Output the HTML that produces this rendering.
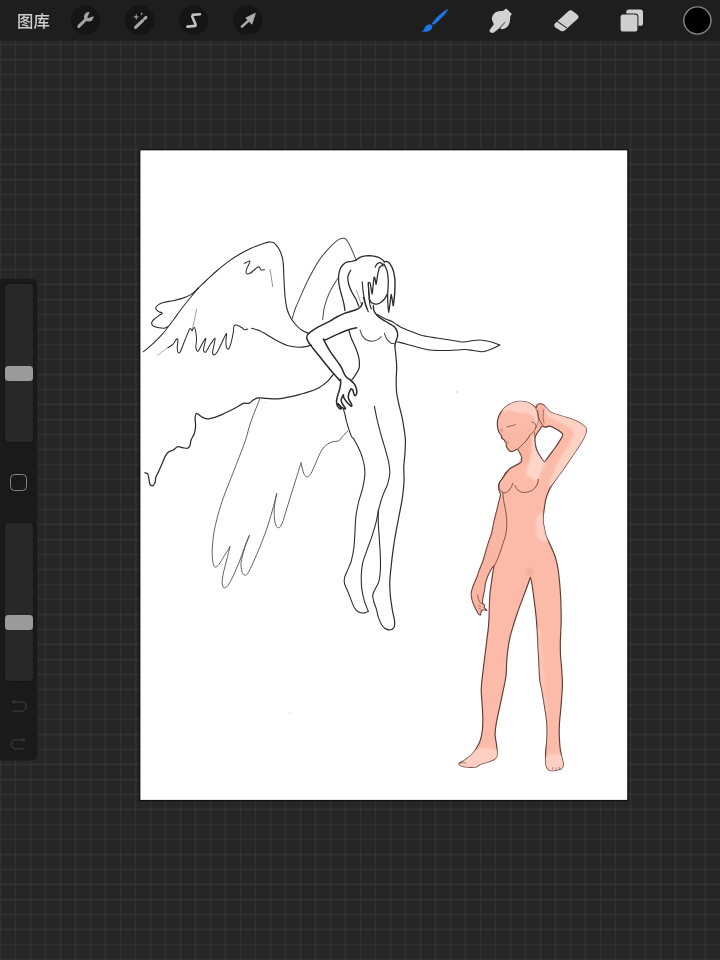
<!DOCTYPE html>
<html lang="zh-CN">
<head>
<meta charset="utf-8">
<title>Procreate</title>
<style>
html,body{margin:0;padding:0;}
body{width:720px;height:960px;overflow:hidden;position:relative;background:#262626;
 font-family:"Liberation Sans","Noto Sans CJK SC",sans-serif;}
#grid{position:absolute;left:0;top:0;width:720px;height:960px;
 background-image:
  linear-gradient(to right,rgba(255,255,255,0.014) 0,rgba(255,255,255,0.014) 1px,rgba(255,255,255,0.046) 1px,rgba(255,255,255,0.046) 2px,rgba(255,255,255,0.014) 2px,rgba(255,255,255,0.014) 3px,transparent 3px),
  linear-gradient(to bottom,rgba(255,255,255,0.014) 0,rgba(255,255,255,0.014) 1px,rgba(255,255,255,0.046) 1px,rgba(255,255,255,0.046) 2px,rgba(255,255,255,0.014) 2px,rgba(255,255,255,0.014) 3px,transparent 3px);
 background-size:15px 15px,15px 15px;
 background-position:-1px 0,0 13px;}
#topbar{position:absolute;left:0;top:0;width:720px;height:40px;background:#1e1e1e;box-shadow:0 1px 0 rgba(30,30,30,0.45);}
#gallery{position:absolute;left:17.2px;top:9.9px;font-size:16.4px;line-height:22px;color:#cdcdcd;letter-spacing:0;font-weight:500;will-change:transform;}
#canvas{pointer-events:none;}
#side{position:absolute;left:0;top:279px;width:37px;height:481px;background:#1a1a1a;border-radius:0 5px 5px 0;box-shadow:0 0 0 0.5px #202020;}
.sq{position:absolute;left:10px;top:195px;width:15.2px;height:15.4px;border:1.5px solid #848484;border-radius:4.5px;}
.track{position:absolute;left:4.5px;width:28.5px;background:#282828;border-radius:4px;box-shadow:0 0 0 1px #171717,0 0 0 2px rgba(23,23,23,0.45);}
.knob{position:absolute;left:4.5px;width:28.5px;height:15px;background:#9b9b9b;border-radius:3.5px;}
#art{position:absolute;left:0;top:0;width:720px;height:960px;}
</style>
</head>
<body>
<div id="grid"></div>
<svg id="canvas" width="720" height="960" viewBox="0 0 720 960" style="position:absolute;left:0;top:0"><rect x="138.6" y="148.6" width="490.2" height="652.9" fill="#1b1b1b" opacity="0.6"/><rect x="139.3" y="149.3" width="488.9" height="651.6" fill="#101010"/><rect x="140.4" y="150.35" width="486.8" height="649.55" fill="#fff"/></svg>
<div id="side">
 <div class="track" style="top:5px;height:158px"></div>
 <div class="knob" style="top:86.5px"></div>
 <div class="sq"></div>
 <div class="track" style="top:244px;height:158px"></div>
 <div class="knob" style="top:335.8px"></div>
 <svg width="37" height="70" viewBox="0 690 37 70" style="position:absolute;left:0;top:411px">
  <g fill="none" stroke="#333" stroke-width="1.5" stroke-linecap="round" stroke-linejoin="round">
   <path d="M13.6,701.8 H21.4 A4.7,4.7 0 0 1 21.4,711.2 H13.2"/>
   <path d="M23.4,739.8 H15.8 A4.5,4.5 0 0 0 15.8,748.8 H23.6"/>
  </g>
  <path d="M11.4,701.8 L14.8,699.2 V704.4 Z" fill="#333"/>
  <path d="M26,739.8 L22.6,737.2 V742.4 Z" fill="#333"/>
 </svg>
</div>
<div id="topbar">
 <div id="gallery">图库</div>
 <svg id="icons" width="720" height="41" viewBox="0 0 720 41" style="position:absolute;left:0;top:0">
  <g fill="#151515">
   <circle cx="85.3" cy="20.2" r="14.6"/><circle cx="139.8" cy="20.2" r="14.6"/><circle cx="193.6" cy="20.2" r="14.6"/><circle cx="247.8" cy="20.2" r="14.6"/>
  </g>
  <!-- wrench -->
  <g>
   <path d="M78.8,26.4 L86.6,18.6" stroke="#a3a3a3" stroke-width="3.0" stroke-linecap="round" fill="none"/>
   <circle cx="88.7" cy="16.8" r="4.8" fill="#a3a3a3"/>
   <path d="M88.3,17.2 L91.2,10.4 L95.6,14.6 Z" fill="#151515" stroke="#151515" stroke-width="1.6" stroke-linejoin="round"/>
  </g>
  <!-- wand -->
  <g>
   <path d="M135.6,27.4 L142.6,20.6" stroke="#a8a8a8" stroke-width="3.0" stroke-linecap="round"/>
   <path d="M144.6,18.7 L146.0,17.4" stroke="#a8a8a8" stroke-width="3.0" stroke-linecap="round"/>
   <path d="M136.2,13.3 L136.9,16.2 L139.8,16.9 L136.9,17.6 L136.2,20.5 L135.5,17.6 L132.6,16.9 L135.5,16.2 Z" fill="#a8a8a8"/>
   <path d="M141.7,12.1 L142.1,13.5 L143.5,13.9 L142.1,14.3 L141.7,15.7 L141.3,14.3 L139.9,13.9 L141.3,13.5 Z" fill="#a8a8a8"/>
  </g>
  <!-- S selection -->
  <g stroke="#c2c2c2" stroke-width="2.6" stroke-linecap="round" fill="none">
   <path d="M192.6,14.9 L200.0,14.2"/>
   <path d="M192.2,16.6 L195.6,24.4"/>
   <path d="M187.4,26.6 L195.4,25.9"/>
  </g>
  <!-- arrow -->
  <g>
   <path d="M241.9,26.7 L249.2,20" stroke="#adadad" stroke-width="2.4" stroke-linecap="round"/>
   <path d="M255.4,13.2 L245.8,17.9 L251.9,24.2 Z" fill="#adadad" stroke="#adadad" stroke-width="0.8" stroke-linejoin="round"/>
  </g>
  <!-- brush (active, blue) -->
  <g fill="#1f74e6">
   <path d="M448.2,9.0 C447.4,12.0 441.0,19.6 433.3,25.0 L431.8,23.5 C437.4,15.8 445.0,9.8 448.2,9.0 Z"/>
   <path d="M431.0,24.4 L432.4,25.9 C432.6,28.6 430.2,31.2 426.6,31.7 C424.4,32.0 422.6,31.8 421.7,31.6 C423.4,30.6 424,29.6 424.6,28.0 C425.6,25.3 428.4,24.0 431.0,24.4 Z"/>
  </g>
  <!-- smudge finger -->
  <g>
   <path d="M491.4,32.8 C490.4,32.6 489.6,32.0 489.6,31.0 C489.5,30.4 489.6,30.0 489.9,29.6 L493.9,24.2 C492.8,22 491.7,19.8 491.9,18.1 C492.1,16 493.8,13.6 495.6,12.3 C497.2,11.3 499.6,10.9 502.2,10.9 C503,10.9 503.6,10.6 503.9,10.3 L506.1,8.4 L511.9,13.9 L510.3,15.9 C510.1,17.6 510.1,20 509.7,22 C509.4,23.5 509,24.5 508.3,25.4 C507.6,26.5 506.6,27.5 505.6,28.1 C504.6,28.8 503.2,29.3 502.2,29.2 C501.4,29.2 500.8,28.9 500.6,28.4 L500.3,27.4 L494.0,32.5 C493.2,33.0 492.2,33.0 491.4,32.8 Z" fill="#d2d2d2"/>
   <path d="M500.1,27.7 L504.7,22.6" stroke="#1e1e1e" stroke-width="0.9" stroke-linecap="round"/>
  </g>
  <!-- eraser -->
  <g>
   <path d="M555.0,23.6 L568.6,11.0 C569.8,9.9 571.4,9.9 572.6,10.9 L577.6,15.0 C578.8,16.0 578.8,17.6 577.7,18.7 L564.6,30.6 C563.6,31.5 562.2,31.6 561.0,30.9 L555.4,27.4 C554.0,26.5 553.9,24.7 555.0,23.6 Z" fill="#d0d0d0"/>
   <path d="M557.3,21.4 L566.6,27.9" stroke="#1e1e1e" stroke-width="1.1"/>
  </g>
  <!-- layers -->
  <g>
   <rect x="626.3" y="9.6" width="16.7" height="16.2" rx="2.6" fill="#cfcfcf"/>
   <rect x="619.6" y="13.6" width="18.8" height="19.0" rx="3.4" fill="#1e1e1e"/>
   <rect x="620.6" y="14.6" width="16.8" height="17.0" rx="2.6" fill="#cfcfcf"/>
  </g>
  <!-- colour -->
  <circle cx="697.4" cy="20.5" r="13.6" fill="#000" stroke="#858585" stroke-width="1.4"/>
 </svg>
</div>
<svg id="art" viewBox="0 0 720 960">
<g id="fig">
<path d="M519.8,401.3C521.4,401.2 524.2,401.5 525.7,401.8C527.2,402.1 529.5,403.1 530.7,403.8C531.9,404.5 534.0,406.2 534.8,406.8C535.6,407.4 536.3,408.4 536.6,408.2C536.9,408.0 536.4,406.0 536.8,405.4C537.2,404.8 538.6,403.9 539.5,403.8C540.4,403.7 542.4,404.1 543.4,404.7C544.4,405.3 546.0,407.6 547.0,408.6C548.0,409.6 549.2,411.5 550.6,412.3C552.0,413.1 555.3,414.0 557.2,414.6C559.1,415.2 562.9,416.3 565.0,417.0C567.1,417.7 570.9,418.7 572.8,419.5C574.7,420.3 578.1,421.8 579.6,422.7C581.1,423.6 583.5,425.2 584.4,426.1C585.3,427.0 586.2,428.4 586.4,429.4C586.6,430.4 586.1,432.5 585.6,433.9C585.1,435.3 583.7,438.3 582.8,440.0C581.9,441.7 579.8,445.0 578.6,446.9C577.4,448.8 574.6,452.8 573.5,454.5C572.4,456.2 571.4,457.4 570.0,459.4C568.6,461.4 565.1,466.9 563.3,469.4C561.5,471.9 558.3,476.1 556.7,478.3C555.1,480.5 552.5,484.2 551.3,486.1C550.1,488.0 548.7,491.0 548.0,492.8C547.3,494.6 546.3,497.5 545.8,499.4C545.3,501.3 544.8,505.1 544.5,507.2C544.2,509.3 543.6,513.1 543.4,515.0C543.2,516.9 543.1,519.9 543.2,521.7C543.3,523.5 544.0,526.4 544.4,528.3C544.8,530.2 545.1,533.1 546.0,535.6C546.9,538.1 549.8,543.7 551.1,546.7C552.4,549.7 554.7,554.7 555.6,557.8C556.5,560.9 557.7,566.7 558.2,570.0C558.7,573.3 559.3,578.9 559.6,582.2C559.9,585.5 560.3,591.1 560.5,594.4C560.7,597.7 560.9,603.4 561.0,606.7C561.1,610.0 561.2,615.6 561.2,618.9C561.2,622.2 560.9,627.8 560.8,631.1C560.7,634.4 560.3,640.0 560.3,643.3C560.3,646.6 560.3,652.3 560.5,655.6C560.7,658.9 561.4,664.5 561.6,667.8C561.8,671.1 562.2,677.0 562.3,680.0C562.4,683.0 562.4,686.6 562.2,690.0C562.0,693.4 561.4,701.7 561.1,705.6C560.8,709.5 560.1,715.6 559.8,718.9C559.5,722.2 559.3,727.4 559.2,730.0C559.1,732.6 559.3,735.6 559.4,738.1C559.5,740.6 559.9,746.3 560.2,748.9C560.5,751.5 561.6,755.8 562.0,757.9C562.4,760.0 563.5,763.1 563.4,764.6C563.3,766.1 562.1,768.1 561.2,768.8C560.3,769.5 557.8,769.9 556.5,770.2C555.2,770.5 552.3,770.9 551.1,770.7C549.9,770.5 548.2,769.8 547.5,768.8C546.8,767.8 546.0,765.5 545.7,763.3C545.4,761.1 545.5,755.4 545.6,752.5C545.7,749.6 546.4,744.6 546.6,741.7C546.8,738.8 547.1,733.8 547.1,730.8C547.1,727.8 546.8,722.3 546.4,718.9C546.0,715.5 545.0,709.5 544.4,705.6C543.8,701.7 542.4,693.4 541.8,690.0C541.2,686.6 540.2,683.8 539.8,680.0C539.4,676.2 539.0,666.2 538.8,661.7C538.6,657.2 538.2,650.5 538.0,646.4C537.8,642.3 537.5,635.2 537.2,631.1C536.9,627.0 536.4,619.9 536.0,615.8C535.6,611.7 534.7,604.3 534.2,600.6C533.7,596.9 533.0,591.0 532.6,588.3C532.2,585.6 531.4,581.5 531.1,580.0C530.8,578.5 530.5,577.4 530.3,577.4C530.1,577.4 529.9,578.5 529.4,580.0C528.9,581.5 527.5,585.6 526.5,588.3C525.5,591.0 523.1,597.3 521.9,600.6C520.7,603.9 518.5,609.5 517.4,612.8C516.3,616.1 514.5,621.7 513.5,625.0C512.5,628.3 510.7,633.9 510.0,637.2C509.3,640.5 508.3,646.2 507.9,649.5C507.5,652.8 506.9,658.4 506.7,661.7C506.5,665.0 506.4,671.5 506.2,673.9C506.0,676.3 505.8,677.9 505.4,680.0C505.0,682.1 504.0,686.6 503.3,690.0C502.6,693.4 500.9,701.5 500.0,705.6C499.1,709.7 497.4,717.3 496.7,721.1C496.0,724.9 495.1,731.2 495.1,734.4C495.1,737.6 496.3,742.6 496.6,745.3C496.9,748.0 497.5,752.5 497.3,754.3C497.1,756.1 496.2,757.8 495.1,758.8C494.0,759.8 490.8,761.0 488.8,761.8C486.8,762.6 481.5,763.9 479.8,764.6C478.1,765.3 477.8,766.7 476.2,767.0C474.6,767.3 470.2,767.4 468.1,767.2C466.0,767.0 462.0,766.2 460.8,765.7C459.6,765.2 458.4,764.3 459.0,763.5C459.6,762.7 463.4,761.2 465.3,759.7C467.2,758.2 471.6,754.9 473.5,752.5C475.4,750.1 478.6,744.6 479.8,741.7C481.0,738.8 481.9,733.8 482.3,730.8C482.7,727.8 482.8,722.3 482.8,718.9C482.8,715.5 482.4,709.5 482.2,705.6C482.0,701.7 481.2,693.4 481.2,690.0C481.2,686.6 481.7,683.4 482.0,680.0C482.3,676.6 483.4,668.4 483.8,664.7C484.2,661.0 484.9,655.8 485.3,652.5C485.7,649.2 486.4,643.6 486.8,640.3C487.2,637.0 488.0,631.4 488.3,628.1C488.6,624.8 489.0,619.1 489.1,615.8C489.2,612.5 489.3,606.9 489.4,603.6C489.5,600.3 489.9,594.2 490.2,591.4C490.5,588.6 491.1,584.8 491.4,582.5C491.7,580.2 492.3,576.4 492.6,574.2C492.9,572.0 494.0,566.6 493.8,566.0C493.6,565.4 491.6,568.6 490.8,570.0C490.0,571.4 488.2,574.9 487.5,576.7C486.8,578.5 485.8,581.5 485.4,583.3C485.0,585.1 484.9,588.3 484.6,590.0C484.3,591.7 483.6,594.4 483.3,595.8C483.0,597.2 482.6,599.8 482.5,600.8C482.4,601.8 482.2,602.7 482.5,603.3C482.8,603.9 484.4,604.7 484.6,605.2C484.8,605.7 483.7,606.6 484.0,607.3C484.3,608.0 486.8,610.2 486.8,610.5C486.8,610.8 484.9,609.7 484.2,609.8C483.5,609.9 482.0,610.5 481.5,611.0C481.0,611.5 480.9,612.8 480.8,613.3C480.7,613.8 480.7,615.1 480.4,615.1C480.1,615.1 479.0,614.4 478.2,613.3C477.4,612.2 475.5,608.6 474.6,606.7C473.7,604.8 472.2,601.0 471.8,599.0C471.4,597.0 471.1,593.9 471.4,592.0C471.7,590.1 473.0,586.6 473.8,584.5C474.6,582.4 476.3,578.7 477.1,576.5C477.9,574.3 479.2,570.5 480.0,568.3C480.8,566.1 482.3,563.2 483.3,560.0C484.3,556.8 486.7,548.0 487.8,544.4C488.9,540.8 490.9,535.8 491.7,532.8C492.5,529.8 493.2,524.7 493.9,521.7C494.6,518.7 496.0,513.3 496.7,510.6C497.4,507.9 498.4,503.8 498.9,501.7C499.4,499.6 500.6,495.9 500.6,494.5C500.6,493.1 499.5,492.0 499.2,491.0C498.9,490.0 498.6,488.3 498.6,487.2C498.6,486.1 498.8,484.1 499.4,482.8C500.0,481.5 502.4,478.5 503.3,477.2C504.2,475.9 505.0,473.9 506.0,472.7C507.0,471.5 509.4,469.0 510.8,468.0C512.2,467.0 515.0,465.9 516.4,465.1C517.8,464.3 520.6,462.9 521.3,461.7C522.0,460.5 521.8,457.7 521.3,456.1C520.8,454.5 518.6,450.0 517.5,449.4C516.4,448.8 514.2,451.0 513.2,451.3C512.2,451.6 511.0,451.6 510.3,451.3C509.6,451.0 508.4,449.6 507.8,448.8C507.2,448.0 506.3,446.2 506.1,445.5C505.9,444.8 506.6,443.8 506.5,443.4C506.4,443.0 505.6,442.7 505.3,442.2C505.0,441.7 504.5,440.3 504.0,439.7C503.5,439.1 501.8,438.1 501.5,437.6C501.2,437.1 502.0,436.7 501.9,436.3C501.8,435.9 501.1,435.4 500.7,434.7C500.3,434.0 499.0,432.4 498.6,431.3C498.2,430.2 497.6,427.7 497.5,426.3C497.4,424.9 497.2,422.0 497.5,420.5C497.8,419.0 498.6,416.2 499.4,414.7C500.2,413.2 502.0,410.6 503.2,409.3C504.4,408.0 506.8,406.0 508.2,405.1C509.6,404.2 512.5,402.7 514.0,402.2C515.5,401.7 518.2,401.4 519.8,401.3Z M541.7,426.4C542.4,426.1 544.5,427.1 545.5,427.1C546.5,427.1 548.2,426.0 549.4,426.1C550.6,426.2 553.0,427.3 554.3,428.0C555.6,428.7 558.1,430.2 559.2,431.0C560.3,431.8 562.2,433.1 562.6,433.9C563.0,434.7 562.6,435.8 562.1,436.8C561.6,437.8 560.1,440.2 559.2,441.6C558.3,443.0 556.4,445.9 555.3,447.5C554.2,449.1 552.0,451.8 550.9,453.3C549.8,454.8 547.9,457.6 547.0,458.7C546.1,459.8 545.1,461.8 544.4,461.9C543.7,462.0 542.5,460.2 541.7,459.1C540.9,458.0 539.1,454.8 538.3,453.3C537.5,451.8 536.3,449.1 535.8,447.5C535.3,445.9 534.8,443.0 534.7,441.6C534.6,440.2 534.9,438.0 535.3,436.8C535.7,435.6 536.9,433.5 537.6,432.5C538.3,431.5 539.7,429.8 540.2,429.0C540.7,428.2 541.0,426.7 541.7,426.4Z" fill="#fcbba8" fill-rule="evenodd" stroke="#5e3a34" stroke-width="1.15" stroke-linejoin="round"/>
<clipPath id="sil"><path d="M519.8,401.3C521.4,401.2 524.2,401.5 525.7,401.8C527.2,402.1 529.5,403.1 530.7,403.8C531.9,404.5 534.0,406.2 534.8,406.8C535.6,407.4 536.3,408.4 536.6,408.2C536.9,408.0 536.4,406.0 536.8,405.4C537.2,404.8 538.6,403.9 539.5,403.8C540.4,403.7 542.4,404.1 543.4,404.7C544.4,405.3 546.0,407.6 547.0,408.6C548.0,409.6 549.2,411.5 550.6,412.3C552.0,413.1 555.3,414.0 557.2,414.6C559.1,415.2 562.9,416.3 565.0,417.0C567.1,417.7 570.9,418.7 572.8,419.5C574.7,420.3 578.1,421.8 579.6,422.7C581.1,423.6 583.5,425.2 584.4,426.1C585.3,427.0 586.2,428.4 586.4,429.4C586.6,430.4 586.1,432.5 585.6,433.9C585.1,435.3 583.7,438.3 582.8,440.0C581.9,441.7 579.8,445.0 578.6,446.9C577.4,448.8 574.6,452.8 573.5,454.5C572.4,456.2 571.4,457.4 570.0,459.4C568.6,461.4 565.1,466.9 563.3,469.4C561.5,471.9 558.3,476.1 556.7,478.3C555.1,480.5 552.5,484.2 551.3,486.1C550.1,488.0 548.7,491.0 548.0,492.8C547.3,494.6 546.3,497.5 545.8,499.4C545.3,501.3 544.8,505.1 544.5,507.2C544.2,509.3 543.6,513.1 543.4,515.0C543.2,516.9 543.1,519.9 543.2,521.7C543.3,523.5 544.0,526.4 544.4,528.3C544.8,530.2 545.1,533.1 546.0,535.6C546.9,538.1 549.8,543.7 551.1,546.7C552.4,549.7 554.7,554.7 555.6,557.8C556.5,560.9 557.7,566.7 558.2,570.0C558.7,573.3 559.3,578.9 559.6,582.2C559.9,585.5 560.3,591.1 560.5,594.4C560.7,597.7 560.9,603.4 561.0,606.7C561.1,610.0 561.2,615.6 561.2,618.9C561.2,622.2 560.9,627.8 560.8,631.1C560.7,634.4 560.3,640.0 560.3,643.3C560.3,646.6 560.3,652.3 560.5,655.6C560.7,658.9 561.4,664.5 561.6,667.8C561.8,671.1 562.2,677.0 562.3,680.0C562.4,683.0 562.4,686.6 562.2,690.0C562.0,693.4 561.4,701.7 561.1,705.6C560.8,709.5 560.1,715.6 559.8,718.9C559.5,722.2 559.3,727.4 559.2,730.0C559.1,732.6 559.3,735.6 559.4,738.1C559.5,740.6 559.9,746.3 560.2,748.9C560.5,751.5 561.6,755.8 562.0,757.9C562.4,760.0 563.5,763.1 563.4,764.6C563.3,766.1 562.1,768.1 561.2,768.8C560.3,769.5 557.8,769.9 556.5,770.2C555.2,770.5 552.3,770.9 551.1,770.7C549.9,770.5 548.2,769.8 547.5,768.8C546.8,767.8 546.0,765.5 545.7,763.3C545.4,761.1 545.5,755.4 545.6,752.5C545.7,749.6 546.4,744.6 546.6,741.7C546.8,738.8 547.1,733.8 547.1,730.8C547.1,727.8 546.8,722.3 546.4,718.9C546.0,715.5 545.0,709.5 544.4,705.6C543.8,701.7 542.4,693.4 541.8,690.0C541.2,686.6 540.2,683.8 539.8,680.0C539.4,676.2 539.0,666.2 538.8,661.7C538.6,657.2 538.2,650.5 538.0,646.4C537.8,642.3 537.5,635.2 537.2,631.1C536.9,627.0 536.4,619.9 536.0,615.8C535.6,611.7 534.7,604.3 534.2,600.6C533.7,596.9 533.0,591.0 532.6,588.3C532.2,585.6 531.4,581.5 531.1,580.0C530.8,578.5 530.5,577.4 530.3,577.4C530.1,577.4 529.9,578.5 529.4,580.0C528.9,581.5 527.5,585.6 526.5,588.3C525.5,591.0 523.1,597.3 521.9,600.6C520.7,603.9 518.5,609.5 517.4,612.8C516.3,616.1 514.5,621.7 513.5,625.0C512.5,628.3 510.7,633.9 510.0,637.2C509.3,640.5 508.3,646.2 507.9,649.5C507.5,652.8 506.9,658.4 506.7,661.7C506.5,665.0 506.4,671.5 506.2,673.9C506.0,676.3 505.8,677.9 505.4,680.0C505.0,682.1 504.0,686.6 503.3,690.0C502.6,693.4 500.9,701.5 500.0,705.6C499.1,709.7 497.4,717.3 496.7,721.1C496.0,724.9 495.1,731.2 495.1,734.4C495.1,737.6 496.3,742.6 496.6,745.3C496.9,748.0 497.5,752.5 497.3,754.3C497.1,756.1 496.2,757.8 495.1,758.8C494.0,759.8 490.8,761.0 488.8,761.8C486.8,762.6 481.5,763.9 479.8,764.6C478.1,765.3 477.8,766.7 476.2,767.0C474.6,767.3 470.2,767.4 468.1,767.2C466.0,767.0 462.0,766.2 460.8,765.7C459.6,765.2 458.4,764.3 459.0,763.5C459.6,762.7 463.4,761.2 465.3,759.7C467.2,758.2 471.6,754.9 473.5,752.5C475.4,750.1 478.6,744.6 479.8,741.7C481.0,738.8 481.9,733.8 482.3,730.8C482.7,727.8 482.8,722.3 482.8,718.9C482.8,715.5 482.4,709.5 482.2,705.6C482.0,701.7 481.2,693.4 481.2,690.0C481.2,686.6 481.7,683.4 482.0,680.0C482.3,676.6 483.4,668.4 483.8,664.7C484.2,661.0 484.9,655.8 485.3,652.5C485.7,649.2 486.4,643.6 486.8,640.3C487.2,637.0 488.0,631.4 488.3,628.1C488.6,624.8 489.0,619.1 489.1,615.8C489.2,612.5 489.3,606.9 489.4,603.6C489.5,600.3 489.9,594.2 490.2,591.4C490.5,588.6 491.1,584.8 491.4,582.5C491.7,580.2 492.3,576.4 492.6,574.2C492.9,572.0 494.0,566.6 493.8,566.0C493.6,565.4 491.6,568.6 490.8,570.0C490.0,571.4 488.2,574.9 487.5,576.7C486.8,578.5 485.8,581.5 485.4,583.3C485.0,585.1 484.9,588.3 484.6,590.0C484.3,591.7 483.6,594.4 483.3,595.8C483.0,597.2 482.6,599.8 482.5,600.8C482.4,601.8 482.2,602.7 482.5,603.3C482.8,603.9 484.4,604.7 484.6,605.2C484.8,605.7 483.7,606.6 484.0,607.3C484.3,608.0 486.8,610.2 486.8,610.5C486.8,610.8 484.9,609.7 484.2,609.8C483.5,609.9 482.0,610.5 481.5,611.0C481.0,611.5 480.9,612.8 480.8,613.3C480.7,613.8 480.7,615.1 480.4,615.1C480.1,615.1 479.0,614.4 478.2,613.3C477.4,612.2 475.5,608.6 474.6,606.7C473.7,604.8 472.2,601.0 471.8,599.0C471.4,597.0 471.1,593.9 471.4,592.0C471.7,590.1 473.0,586.6 473.8,584.5C474.6,582.4 476.3,578.7 477.1,576.5C477.9,574.3 479.2,570.5 480.0,568.3C480.8,566.1 482.3,563.2 483.3,560.0C484.3,556.8 486.7,548.0 487.8,544.4C488.9,540.8 490.9,535.8 491.7,532.8C492.5,529.8 493.2,524.7 493.9,521.7C494.6,518.7 496.0,513.3 496.7,510.6C497.4,507.9 498.4,503.8 498.9,501.7C499.4,499.6 500.6,495.9 500.6,494.5C500.6,493.1 499.5,492.0 499.2,491.0C498.9,490.0 498.6,488.3 498.6,487.2C498.6,486.1 498.8,484.1 499.4,482.8C500.0,481.5 502.4,478.5 503.3,477.2C504.2,475.9 505.0,473.9 506.0,472.7C507.0,471.5 509.4,469.0 510.8,468.0C512.2,467.0 515.0,465.9 516.4,465.1C517.8,464.3 520.6,462.9 521.3,461.7C522.0,460.5 521.8,457.7 521.3,456.1C520.8,454.5 518.6,450.0 517.5,449.4C516.4,448.8 514.2,451.0 513.2,451.3C512.2,451.6 511.0,451.6 510.3,451.3C509.6,451.0 508.4,449.6 507.8,448.8C507.2,448.0 506.3,446.2 506.1,445.5C505.9,444.8 506.6,443.8 506.5,443.4C506.4,443.0 505.6,442.7 505.3,442.2C505.0,441.7 504.5,440.3 504.0,439.7C503.5,439.1 501.8,438.1 501.5,437.6C501.2,437.1 502.0,436.7 501.9,436.3C501.8,435.9 501.1,435.4 500.7,434.7C500.3,434.0 499.0,432.4 498.6,431.3C498.2,430.2 497.6,427.7 497.5,426.3C497.4,424.9 497.2,422.0 497.5,420.5C497.8,419.0 498.6,416.2 499.4,414.7C500.2,413.2 502.0,410.6 503.2,409.3C504.4,408.0 506.8,406.0 508.2,405.1C509.6,404.2 512.5,402.7 514.0,402.2C515.5,401.7 518.2,401.4 519.8,401.3Z M541.7,426.4C542.4,426.1 544.5,427.1 545.5,427.1C546.5,427.1 548.2,426.0 549.4,426.1C550.6,426.2 553.0,427.3 554.3,428.0C555.6,428.7 558.1,430.2 559.2,431.0C560.3,431.8 562.2,433.1 562.6,433.9C563.0,434.7 562.6,435.8 562.1,436.8C561.6,437.8 560.1,440.2 559.2,441.6C558.3,443.0 556.4,445.9 555.3,447.5C554.2,449.1 552.0,451.8 550.9,453.3C549.8,454.8 547.9,457.6 547.0,458.7C546.1,459.8 545.1,461.8 544.4,461.9C543.7,462.0 542.5,460.2 541.7,459.1C540.9,458.0 539.1,454.8 538.3,453.3C537.5,451.8 536.3,449.1 535.8,447.5C535.3,445.9 534.8,443.0 534.7,441.6C534.6,440.2 534.9,438.0 535.3,436.8C535.7,435.6 536.9,433.5 537.6,432.5C538.3,431.5 539.7,429.8 540.2,429.0C540.7,428.2 541.0,426.7 541.7,426.4Z" clip-rule="evenodd" fill-rule="evenodd"/></clipPath>
<filter id="soft" x="-20%" y="-20%" width="140%" height="140%"><feGaussianBlur stdDeviation="0.9"/></filter>
<g clip-path="url(#sil)"><g filter="url(#soft)"><path d="M503.0,492.0C504.9,493.6 503.7,499.2 504.0,501.7C504.3,504.2 505.2,508.2 505.6,510.6C506.0,513.0 506.6,517.2 506.7,519.4C506.8,521.6 506.9,524.9 506.7,527.2C506.5,529.5 505.8,534.2 505.0,537.0C504.2,539.8 502.1,544.8 501.0,548.0C499.9,551.2 497.6,557.5 496.5,561.0C495.4,564.5 493.4,570.1 492.5,574.0C491.6,577.9 490.6,584.9 490.0,590.0C489.4,595.1 491.3,608.0 488.0,612.0C484.7,616.0 468.1,626.9 465.0,620.0C461.9,613.1 461.7,577.3 465.0,560.0C468.3,542.7 484.9,499.1 490.0,490.0C495.1,480.9 501.1,490.4 503.0,492.0Z" fill="#f3ac97" opacity="0.3"/><path d="M503.0,412.0C504.1,412.9 506.5,410.7 508.0,410.6C509.5,410.5 512.4,411.3 514.0,411.6C515.6,411.9 518.1,412.4 520.0,412.6C521.9,412.8 526.3,413.0 528.0,413.4C529.7,413.8 531.6,414.6 532.5,415.5C533.4,416.4 534.4,418.7 534.8,420.0C535.2,421.3 535.4,424.5 535.8,425.0C536.2,425.5 537.3,424.9 537.6,424.0C537.9,423.1 538.4,419.7 538.4,418.0C538.4,416.3 537.9,412.9 537.6,411.5C537.3,410.1 536.6,409.3 536.0,407.5C535.4,405.7 537.1,399.3 533.0,398.0C528.9,396.7 509.4,397.2 505.0,398.0C500.6,398.8 500.3,402.1 500.0,404.0C499.7,405.9 501.9,411.1 503.0,412.0Z" fill="#fdd6c9" opacity="0.85"/><path d="M531.4,436.0L535.4,434.6L536.5,449.2L540.0,455.5L545.8,461.7L542.2,469.4L538.9,477.2L537.2,481.7L532.2,478.3L525.6,475.0L527.8,467.2L530.4,459.0L531.9,449.0Z" fill="#fdd6c9"/><path d="M547.0,415.0C548.0,417.6 552.0,418.3 554.3,419.6C556.6,420.9 561.7,423.3 564.0,424.6C566.3,425.9 570.6,428.0 571.8,429.5C573.0,431.0 573.6,433.9 573.3,435.8C573.0,437.7 570.6,441.5 569.4,443.6C568.2,445.7 565.8,449.3 564.5,451.4C563.2,453.5 560.7,457.3 559.7,459.1C558.7,460.9 557.6,463.0 556.7,465.0C555.8,467.0 554.0,471.5 553.0,474.0C552.0,476.5 548.6,482.4 549.5,484.0C550.4,485.6 553.3,490.5 560.0,486.0C566.7,481.5 594.7,461.5 600.0,450.0C605.3,438.5 607.1,406.7 600.0,400.0C592.9,393.3 554.1,398.0 547.0,400.0C539.9,402.0 546.0,412.4 547.0,415.0Z" fill="#fdd6c9" opacity="0.85"/><path d="M536.9,517.2C537.8,515.7 541.4,511.4 542.6,512.0C543.8,512.6 545.3,518.5 546.0,521.7C546.7,524.9 548.0,533.3 548.0,536.0C548.0,538.7 547.3,541.7 546.0,542.0C544.7,542.3 539.4,539.6 538.0,538.0C536.6,536.4 536.1,532.0 535.8,530.0C535.5,528.0 535.9,524.7 536.0,523.0C536.1,521.3 536.0,518.7 536.9,517.2Z" fill="#fdd6c9" opacity="0.8"/><path d="M456.0,770.0C450.9,768.1 459.9,760.5 462.0,758.0C464.1,755.5 469.3,752.3 472.0,751.0C474.7,749.7 479.3,748.3 482.0,748.0C484.7,747.7 489.6,748.5 492.0,749.0C494.4,749.5 498.9,748.9 500.0,752.0C501.1,755.1 505.9,769.6 500.0,772.0C494.1,774.4 461.1,771.9 456.0,770.0Z" fill="#fdd6c9" opacity="0.8"/><path d="M544.0,775.0C541.2,772.7 544.1,760.8 545.0,758.0C545.9,755.2 549.3,754.5 551.0,754.0C552.7,753.5 556.1,753.5 558.0,754.0C559.9,754.5 563.9,755.2 565.0,758.0C566.1,760.8 568.8,772.7 566.0,775.0C563.2,777.3 546.8,777.3 544.0,775.0Z" fill="#fdd6c9" opacity="0.8"/><path d="M536.0,630.0C536.3,626.0 539.6,626.0 540.5,630.0C541.4,634.0 542.3,652.0 543.0,660.0C543.7,668.0 544.8,682.3 545.5,690.0C546.2,697.7 548.0,711.3 548.5,718.0C549.0,724.7 549.5,736.4 549.0,740.0C548.5,743.6 545.8,747.7 545.0,745.0C544.2,742.3 543.7,727.3 543.0,720.0C542.3,712.7 540.7,698.0 540.0,690.0C539.3,682.0 538.5,668.0 538.0,660.0C537.5,652.0 535.7,634.0 536.0,630.0Z" fill="#fdd6c9" opacity="0.4"/><path d="M537.0,404.0C537.4,402.6 540.1,402.9 541.0,403.5C541.9,404.1 543.3,407.4 543.6,408.8C543.9,410.2 543.1,412.6 543.0,414.0C542.9,415.4 543.0,417.7 543.2,419.0C543.4,420.3 543.8,422.3 544.2,423.5C544.6,424.7 546.4,427.5 546.0,428.0C545.6,428.5 542.0,427.9 541.0,427.0C540.0,426.1 539.0,422.7 538.6,421.0C538.2,419.3 538.2,416.3 538.0,414.0C537.8,411.7 536.6,405.4 537.0,404.0Z" fill="#f3ac97" opacity="0.55"/><ellipse cx="530" cy="572.5" rx="4" ry="5" fill="#d9a193" opacity="0.4"/><path d="M517.5,449.5C517.8,448.0 521.9,446.3 523.3,445.0C524.7,443.7 527.1,440.6 528.2,439.4C529.3,438.2 531.0,435.0 531.5,436.0C532.0,437.0 531.8,444.1 531.6,447.0C531.4,449.9 530.7,455.9 530.0,458.0C529.3,460.1 527.1,462.5 526.0,463.0C524.9,463.5 522.1,462.6 521.5,461.7C520.9,460.8 521.8,457.7 521.3,456.1C520.8,454.5 517.2,451.0 517.5,449.5Z" fill="#f3ac97" opacity="0.45"/><path d="M499.0,428.0C499.8,427.5 504.0,430.3 506.0,431.0C508.0,431.7 511.9,432.9 514.0,433.0C516.1,433.1 519.9,432.7 522.0,432.0C524.1,431.3 528.3,428.8 530.0,428.0C531.7,427.2 534.5,425.5 535.0,426.0C535.5,426.5 534.9,430.1 534.0,432.0C533.1,433.9 529.7,438.1 528.0,440.0C526.3,441.9 523.0,444.5 521.0,446.0C519.0,447.5 514.7,451.1 513.0,451.5C511.3,451.9 509.2,450.5 508.0,449.0C506.8,447.5 505.1,441.9 504.0,440.0C502.9,438.1 500.7,436.6 500.0,435.0C499.3,433.4 498.2,428.5 499.0,428.0Z" fill="#f3ac97" opacity="0.25"/></g></g>
<path d="M517.5,449.4C518.0,448.9 520.4,446.6 521.5,445.5C522.6,444.4 524.6,442.6 525.7,441.3C526.8,440.0 529.0,436.7 529.5,436.0" fill="none" stroke="#5e3a34" stroke-width="0.9" stroke-opacity="1.0" stroke-linecap="round" stroke-linejoin="round"/>
<path d="M507.3,426.8C507.8,426.7 509.8,426.1 510.7,425.9C511.6,425.7 513.4,425.3 514.0,425.1C514.6,424.9 515.1,424.6 515.3,424.5" fill="none" stroke="#5e3a34" stroke-width="0.7" stroke-opacity="1.0" stroke-linecap="round" stroke-linejoin="round"/>
<path d="M500.7,429.3 L502.3,430.5" fill="none" stroke="#5e3a34" stroke-width="0.6" stroke-opacity="1.0" stroke-linecap="round" stroke-linejoin="round"/>
<path d="M506.1,441.3 L508.6,442.2" fill="none" stroke="#c8705e" stroke-width="0.6" stroke-opacity="0.8" stroke-linecap="round" stroke-linejoin="round"/>
<path d="M506.5,444.3 L508.2,443.8" fill="none" stroke="#c8705e" stroke-width="0.6" stroke-opacity="0.8" stroke-linecap="round" stroke-linejoin="round"/>
<path d="M534.6,432.5C534.7,433.6 534.8,438.6 535.1,440.8C535.4,443.0 535.9,447.3 536.5,449.2C537.1,451.1 538.3,453.1 539.3,454.7C540.3,456.3 543.5,460.6 544.2,461.5" fill="none" stroke="#5e3a34" stroke-width="0.8" stroke-opacity="1.0" stroke-linecap="round" stroke-linejoin="round"/>
<path d="M537.7,410.5C537.8,411.2 537.9,414.2 538.2,415.5C538.5,416.8 539.3,419.3 539.8,420.5C540.3,421.7 541.6,423.8 542.3,424.7C543.0,425.6 544.6,427.0 545.3,427.2C546.0,427.4 547.0,426.4 547.3,426.3" fill="none" stroke="#5e3a34" stroke-width="0.9" stroke-opacity="1.0" stroke-linecap="round" stroke-linejoin="round"/>
<path d="M544.0,408.8C543.9,409.5 543.3,412.5 543.2,413.8C543.1,415.1 543.1,417.6 543.2,418.8C543.3,420.0 543.9,422.4 544.0,423.0" fill="none" stroke="#5e3a34" stroke-width="0.7" stroke-opacity="0.8" stroke-linecap="round" stroke-linejoin="round"/>
<path d="M534.8,406.8C535.1,407.4 536.5,409.8 537.0,411.0C537.5,412.2 538.0,414.7 538.2,416.0C538.4,417.3 538.5,419.7 538.3,421.0C538.1,422.3 537.4,424.5 537.0,425.5C536.6,426.5 535.5,428.1 535.3,428.5" fill="none" stroke="#5e3a34" stroke-width="0.7" stroke-opacity="0.8" stroke-linecap="round" stroke-linejoin="round"/>
<path d="M521.1,458.3C520.8,458.9 519.9,461.8 518.9,462.8C517.9,463.8 515.1,465.4 513.9,466.1C512.7,466.8 511.0,467.6 510.0,468.3C509.0,469.0 507.5,470.7 506.7,471.7C505.9,472.7 504.3,475.1 503.9,475.6" fill="none" stroke="#5e3a34" stroke-width="0.7" stroke-opacity="0.6" stroke-linecap="round" stroke-linejoin="round"/>
<path d="M507.8,471.7C507.2,472.4 504.4,475.7 503.3,477.2C502.2,478.7 500.0,481.5 499.4,482.8C498.8,484.1 498.7,486.1 498.9,487.2C499.1,488.3 500.4,490.4 501.1,491.1C501.8,491.8 503.4,492.8 504.4,492.8C505.4,492.8 507.3,492.0 508.3,491.1C509.3,490.2 511.1,487.1 511.7,486.1C512.3,485.1 512.7,483.7 512.8,483.3" fill="none" stroke="#5e3a34" stroke-width="0.8" stroke-opacity="1.0" stroke-linecap="round" stroke-linejoin="round"/>
<path d="M515.0,485.6C515.3,486.1 516.3,488.5 517.2,489.4C518.1,490.3 520.4,491.8 521.7,492.2C523.0,492.6 525.4,492.4 526.7,492.2C528.0,492.0 530.5,491.3 531.7,490.6C532.9,489.9 534.8,488.2 535.6,487.2C536.4,486.2 537.4,483.8 537.8,482.8C538.2,481.8 538.2,479.9 538.3,479.4" fill="none" stroke="#5e3a34" stroke-width="0.8" stroke-opacity="1.0" stroke-linecap="round" stroke-linejoin="round"/>
<path d="M502.8,492.8C502.9,494.0 503.5,499.3 503.9,501.7C504.3,504.1 505.2,508.2 505.6,510.6C506.0,513.0 506.6,517.2 506.7,519.4C506.8,521.6 506.8,525.1 506.7,527.2C506.6,529.3 506.2,532.5 505.6,535.0C505.0,537.5 503.2,542.9 502.2,546.0C501.2,549.1 499.1,555.3 498.0,558.0C496.9,560.7 494.7,564.9 494.2,566.0" fill="none" stroke="#5e3a34" stroke-width="0.8" stroke-opacity="1.0" stroke-linecap="round" stroke-linejoin="round"/>
<path d="M507.8,508.9C507.5,510.7 506.3,518.3 505.6,522.2C504.9,526.1 502.7,535.7 502.2,537.8" fill="none" stroke="#5e3a34" stroke-width="0.5" stroke-opacity="0.0" stroke-linecap="round" stroke-linejoin="round"/>
<path d="M459.6,764.0C460.1,763.8 462.1,762.3 463.0,762.2C463.9,762.1 465.6,763.3 466.0,763.5" fill="none" stroke="#5e3a34" stroke-width="0.6" stroke-opacity="1.0" stroke-linecap="round" stroke-linejoin="round"/>
<path d="M552.5,769.5 L553.0,767.5" fill="none" stroke="#5e3a34" stroke-width="0.5" stroke-opacity="1.0" stroke-linecap="round" stroke-linejoin="round"/>
<path d="M556.0,769.8 L556.3,768.0" fill="none" stroke="#5e3a34" stroke-width="0.5" stroke-opacity="1.0" stroke-linecap="round" stroke-linejoin="round"/>
<path d="M559.3,769.0 L559.3,767.2" fill="none" stroke="#5e3a34" stroke-width="0.5" stroke-opacity="1.0" stroke-linecap="round" stroke-linejoin="round"/>
<path d="M477.6,595.0C477.7,595.6 478.2,598.5 478.6,599.6C479.0,600.7 479.9,602.5 480.4,603.0C480.9,603.5 482.0,603.5 482.2,603.6" fill="none" stroke="#5e3a34" stroke-width="0.7" stroke-opacity="1.0" stroke-linecap="round" stroke-linejoin="round"/>
<path d="M478.0,605.0 L480.8,606.8" fill="none" stroke="#5e3a34" stroke-width="0.6" stroke-opacity="0.8" stroke-linecap="round" stroke-linejoin="round"/>
<path d="M478.6,608.0 L481.5,610.0" fill="none" stroke="#5e3a34" stroke-width="0.6" stroke-opacity="0.8" stroke-linecap="round" stroke-linejoin="round"/>
<path d="M532.2,422.2C532.5,422.3 534.3,422.6 534.8,423.2C535.3,423.8 536.0,425.5 536.0,426.5C536.0,427.5 535.2,429.6 534.6,430.6C534.0,431.6 532.1,433.1 531.4,433.8C530.7,434.5 529.8,435.4 529.6,435.6" fill="none" stroke="#5e3a34" stroke-width="0.8" stroke-opacity="0.9" stroke-linecap="round" stroke-linejoin="round"/>
<path d="M501.6,436.4C501.6,436.6 501.1,437.3 501.3,437.7C501.5,438.1 503.1,439.0 503.4,439.2" fill="none" stroke="#5e3a34" stroke-width="0.6" stroke-opacity="0.8" stroke-linecap="round" stroke-linejoin="round"/>
</g>
<g id="angel" fill="none" stroke-linecap="round" stroke-linejoin="round">
<path d="M196.7,289.6C198.2,288.2 203.5,282.9 206.7,280.0C209.9,277.1 214.5,272.8 217.8,270.0C221.1,267.2 225.6,263.5 228.9,261.1C232.2,258.7 236.7,255.9 240.0,254.0C243.3,252.1 247.8,249.7 251.1,248.2C254.4,246.7 259.6,244.9 262.2,244.0C264.8,243.1 266.6,242.3 268.3,242.1C270.0,241.9 272.0,241.9 273.3,242.4C274.6,242.9 275.7,244.3 276.7,245.6C277.7,246.9 279.2,249.4 280.0,251.1C280.8,252.8 281.7,255.3 282.2,257.2C282.7,259.1 283.1,261.2 283.3,263.9C283.5,266.6 283.7,271.8 283.8,275.0C283.9,278.2 284.1,281.7 284.3,285.0C284.5,288.3 284.7,293.5 285.1,297.0C285.5,300.5 286.1,305.4 286.9,308.5C287.7,311.6 289.1,315.0 290.5,317.5C291.9,320.0 294.3,323.1 296.0,325.0C297.7,326.9 300.1,329.0 302.0,330.3C303.9,331.6 307.9,333.1 309.0,333.6" stroke="#2b2b2b" stroke-width="1.12"/>
<path d="M198.5,288.0C197.4,289.0 193.5,292.8 191.1,294.4C188.7,296.0 184.9,297.5 182.2,298.4C179.5,299.3 176.0,300.1 173.3,300.7C170.6,301.3 166.6,301.6 164.4,302.2C162.2,302.8 160.2,303.5 158.9,304.4C157.6,305.3 155.8,307.2 155.6,308.2C155.4,309.2 156.8,310.3 157.8,311.1C158.8,311.9 162.0,312.6 162.2,313.3C162.4,314.0 160.2,314.6 158.9,315.6C157.6,316.6 154.4,318.8 153.3,320.0C152.2,321.2 151.6,322.4 151.6,323.3C151.6,324.2 152.2,325.3 153.3,326.0C154.4,326.7 157.2,327.5 158.9,327.8C160.6,328.1 163.1,328.4 164.4,328.2C165.7,328.0 167.3,326.9 167.8,326.7" stroke="#2b2b2b" stroke-width="1.12"/>
<path d="M198.2,288.2C197.1,289.5 193.5,293.8 191.1,296.7C188.7,299.6 184.9,304.3 182.2,307.8C179.5,311.3 175.5,317.1 173.3,320.0C171.1,322.9 169.5,325.1 167.8,327.3C166.1,329.5 164.4,332.0 162.2,334.4C160.0,336.8 156.1,340.7 153.3,343.3C150.5,345.9 144.8,350.5 143.3,351.8" stroke="#2b2b2b" stroke-width="1.01"/>
<path d="M158.0,355.0C158.8,354.4 161.5,352.3 163.0,351.2C164.5,350.1 167.2,348.1 168.0,347.6" stroke="#8a8a8a" stroke-width="0.72"/>
<path d="M168.0,347.6C168.7,347.1 171.6,345.6 172.9,344.3C174.2,343.0 175.9,339.6 176.7,339.0C177.5,338.4 177.9,339.2 178.0,340.5C178.1,341.8 177.2,345.6 177.2,347.4C177.2,349.2 177.8,352.1 178.3,352.7C178.8,353.3 179.6,353.1 180.6,351.2C181.6,349.2 183.7,343.0 185.1,339.7C186.5,336.4 188.7,330.4 189.7,329.0C190.7,327.6 191.7,330.4 192.0,330.6" stroke="#2b2b2b" stroke-width="1.01"/>
<path d="M196.6,309.2C196.1,311.5 194.2,321.2 193.5,324.4C192.8,327.6 192.2,329.7 192.0,330.6" stroke="#8a8a8a" stroke-width="0.84"/>
<path d="M192.0,330.6C192.3,330.1 193.7,327.3 194.3,327.5C194.9,327.7 195.5,330.3 195.8,332.1C196.1,333.9 196.6,337.4 196.6,339.7C196.6,342.0 195.6,345.7 195.8,347.4C196.0,349.1 197.1,351.9 198.1,351.2C199.1,350.5 201.5,344.8 202.7,342.8C203.9,340.9 205.6,337.8 205.8,338.2C206.0,338.6 204.5,344.0 204.2,345.8C203.9,347.6 203.3,349.5 203.5,350.4C203.7,351.3 204.8,352.9 205.8,352.0C206.8,351.1 209.0,346.4 210.4,344.3C211.8,342.2 214.3,338.2 214.9,338.2C215.5,338.2 214.5,342.2 214.2,344.3C213.9,346.4 212.6,350.4 212.6,352.0C212.6,353.6 213.5,355.0 214.2,355.0C214.9,355.0 216.1,353.8 217.2,352.0C218.3,350.2 220.4,345.6 221.8,342.8C223.2,340.0 225.8,333.8 226.4,333.6C227.0,333.4 225.9,339.2 225.9,341.3C225.9,343.4 226.0,346.3 226.4,347.4C226.8,348.5 228.0,349.6 228.7,348.9C229.4,348.2 230.3,345.3 231.0,342.8C231.7,340.3 232.9,334.6 233.3,332.1C233.8,329.6 233.4,327.0 234.0,326.0C234.6,325.0 235.9,325.0 237.1,325.2C238.3,325.4 240.6,326.8 241.7,327.5C242.8,328.2 243.8,329.6 244.7,329.8C245.6,330.0 247.3,329.1 247.8,329.0" stroke="#2b2b2b" stroke-width="1.01"/>
<path d="M251.6,328.3C252.7,328.6 257.3,329.9 259.2,330.6C261.1,331.4 261.9,331.9 264.4,333.3C266.9,334.7 272.3,338.2 275.6,340.0C278.9,341.8 283.3,344.1 286.7,345.2C290.1,346.3 295.1,347.0 298.0,347.2C300.9,347.4 304.0,346.9 306.0,346.6C308.0,346.3 310.7,345.2 311.5,345.0" stroke="#2b2b2b" stroke-width="1.12"/>
<path d="M244.4,263.3C245.2,263.0 249.7,260.3 250.0,261.1C250.3,261.9 247.3,267.1 246.7,268.9C246.1,270.7 245.7,272.6 246.2,273.3C246.7,274.0 248.4,274.1 250.0,273.3C251.6,272.5 255.4,268.8 256.7,267.8C258.0,266.8 258.2,266.4 258.9,266.7C259.6,267.0 260.3,269.6 261.1,270.0C261.9,270.4 263.9,269.7 264.4,269.6" stroke="#2b2b2b" stroke-width="1.01"/>
<path d="M270.0,269.6C270.2,271.0 271.2,276.3 271.6,278.9C272.0,281.5 272.5,285.5 272.7,286.7" stroke="#8a8a8a" stroke-width="0.96"/>
<path d="M292.2,318.5C292.7,316.9 294.4,310.9 295.6,307.8C296.8,304.7 298.2,301.9 300.0,297.8C301.8,293.7 305.0,286.2 307.8,280.6C310.6,275.0 315.6,265.6 318.9,260.6C322.2,255.6 327.0,250.4 330.0,247.2C333.0,244.0 336.7,240.7 338.9,239.4C341.1,238.1 343.1,238.0 344.4,238.3C345.7,238.6 346.6,239.9 347.8,241.7C349.0,243.5 351.0,247.9 352.2,250.6C353.4,253.3 355.4,258.2 356.0,259.5" stroke="#4a4a4a" stroke-width="1.01"/>
<path d="M322.6,319.5C322.9,317.7 323.5,311.0 324.4,307.2C325.3,303.4 327.2,297.7 328.9,293.9C330.6,290.1 334.2,284.0 335.6,281.7C337.0,279.4 337.6,278.8 338.0,278.3" stroke="#4a4a4a" stroke-width="1.01"/>
<path d="M356.0,260.3C355.3,260.5 352.5,261.2 351.1,261.5C349.7,261.8 347.9,261.7 346.7,262.2C345.5,262.7 343.8,263.9 342.8,265.0C341.8,266.1 340.6,267.9 340.0,269.4C339.4,270.9 338.9,273.2 338.7,275.0C338.5,276.8 338.5,279.5 338.7,281.7C338.9,283.9 339.5,287.1 340.0,289.4C340.5,291.7 341.6,295.0 342.2,297.2C342.8,299.4 343.5,301.9 343.9,303.9C344.3,305.9 344.8,309.6 345.0,310.6" stroke="#2b2b2b" stroke-width="1.26"/>
<path d="M350.8,270.2C350.5,270.7 349.4,272.4 349.0,273.5C348.6,274.6 347.8,275.5 347.8,277.2C347.8,278.9 348.2,282.7 348.9,285.0C349.6,287.3 351.1,290.6 352.2,292.8C353.3,295.0 355.3,297.7 356.1,299.4C356.9,301.1 357.4,302.9 357.8,303.9C358.2,304.9 358.7,305.8 358.9,306.1" stroke="#2b2b2b" stroke-width="1.26"/>
<path d="M356.1,260.0C356.7,259.6 358.6,258.0 360.0,257.4C361.4,256.8 363.8,256.1 365.6,255.9C367.4,255.7 370.4,255.7 372.2,255.9C374.0,256.1 376.4,256.7 377.8,257.2C379.2,257.7 380.7,258.5 381.7,259.2C382.7,259.9 384.0,261.3 384.4,261.7" stroke="#2b2b2b" stroke-width="1.4"/>
<path d="M384.4,261.7C384.8,261.7 386.2,261.3 387.0,261.6C387.8,261.9 389.1,262.5 390.0,263.9C390.9,265.2 392.6,268.4 393.3,270.6C394.0,272.8 394.5,276.3 394.8,278.3C395.1,280.3 395.0,281.9 395.0,283.9C395.0,285.9 394.9,289.4 394.8,291.7C394.7,294.0 394.3,297.3 394.1,299.4C393.9,301.5 393.4,304.7 393.3,305.6" stroke="#2b2b2b" stroke-width="1.4"/>
<path d="M393.3,305.6C393.2,305.2 392.3,300.1 392.2,299.4C392.1,298.7 391.2,294.1 391.1,294.4C391.0,294.7 390.2,302.7 390.0,303.9C389.8,305.1 388.7,312.3 388.6,312.2C388.5,312.1 387.9,304.0 387.8,302.8C387.7,301.6 387.6,294.9 387.6,293.9C387.6,292.9 388.1,288.0 388.1,287.2C388.1,286.4 388.3,282.5 388.3,281.7C388.3,280.9 387.9,275.9 387.8,275.0C387.7,274.1 386.4,269.0 386.1,268.3C385.8,267.6 384.0,264.2 383.9,263.9" stroke="#2b2b2b" stroke-width="1.26"/>
<path d="M383.0,266.0C382.9,265.6 382.6,263.9 382.0,263.4C381.4,262.9 379.8,262.7 379.0,262.8C378.2,262.9 377.2,263.7 376.6,264.4C376.0,265.1 375.4,266.8 375.2,267.2" stroke="#2b2b2b" stroke-width="1.26"/>
<path d="M379.4,267.2C379.3,267.6 378.0,272.8 377.8,273.9C377.6,275.0 376.3,284.1 376.1,284.4C375.9,284.7 375.1,278.8 375.0,278.3C374.9,277.8 374.2,276.5 374.0,277.5C373.8,278.5 372.4,293.2 372.2,293.9C372.0,294.6 371.2,289.0 371.1,288.3C371.0,287.6 370.2,283.4 370.0,283.0C369.8,282.6 368.5,282.2 368.4,282.8C368.3,283.4 368.8,290.9 368.9,292.0C369.0,293.1 369.4,298.9 369.4,299.4" stroke="#2b2b2b" stroke-width="1.26"/>
<path d="M380.0,267.4C380.4,267.0 381.9,264.9 382.6,264.6C383.3,264.3 384.1,265.1 384.4,265.2" stroke="#2b2b2b" stroke-width="1.12"/>
<path d="M369.4,299.4C369.7,299.8 370.4,301.5 371.1,302.2C371.9,302.9 373.4,303.6 374.4,303.9C375.4,304.2 376.7,304.2 377.8,303.9C378.9,303.6 380.6,302.5 381.7,301.7C382.8,300.9 384.1,299.5 385.0,298.3C385.9,297.1 387.0,294.6 387.4,294.0" stroke="#2b2b2b" stroke-width="1.4"/>
<path d="M368.3,282.8C368.4,284.6 368.6,291.7 368.9,295.0C369.2,298.3 369.6,302.9 370.0,305.0C370.4,307.1 371.1,308.3 371.3,308.9" stroke="#2b2b2b" stroke-width="1.12"/>
<path d="M362.2,281.7C362.3,282.4 362.9,290.3 363.1,291.7C363.3,293.1 365.0,301.5 365.3,302.8C365.6,304.1 368.2,311.4 368.3,311.7C368.4,312.0 366.4,307.5 366.1,306.7C365.8,305.9 364.1,300.0 363.9,299.4C363.7,298.8 363.3,297.3 363.3,297.2" stroke="#2b2b2b" stroke-width="1.12"/>
<path d="M356.7,290.6C357.0,291.6 358.1,295.0 358.9,297.2C359.6,299.4 361.1,304.2 361.7,305.0C362.3,305.8 362.6,303.1 362.8,302.8" stroke="#8a8a8a" stroke-width="0.84"/>
<path d="M373.3,305.6C373.4,306.4 373.4,309.2 373.9,310.6C374.4,312.0 375.5,313.7 376.7,315.0C377.9,316.3 380.4,318.2 382.2,319.4C384.0,320.6 387.1,322.2 388.9,323.3C390.7,324.4 393.2,325.5 394.4,326.8C395.6,328.1 396.7,330.2 397.2,331.7C397.7,333.2 397.7,335.2 397.5,336.7C397.3,338.2 396.2,340.3 395.8,341.7C395.4,343.1 394.9,345.2 394.8,345.8" stroke="#2b2b2b" stroke-width="1.4"/>
<path d="M377.2,314.4C378.5,315.1 383.4,317.8 385.6,318.9C387.8,320.0 389.8,320.4 392.0,321.6C394.2,322.8 397.0,325.2 400.0,326.7C403.0,328.2 408.2,330.3 411.7,331.7C415.2,333.1 419.6,334.9 423.3,335.8C427.1,336.7 432.7,337.4 436.7,338.0C440.7,338.6 446.0,339.4 450.0,340.0C454.0,340.6 460.0,341.9 463.3,342.0C466.6,342.1 469.2,341.1 471.7,340.8C474.2,340.5 477.5,339.9 480.0,340.0C482.5,340.1 486.1,340.8 488.3,341.3C490.6,341.8 493.3,342.7 495.0,343.3C496.7,343.9 499.0,344.7 499.7,345.0" stroke="#2b2b2b" stroke-width="1.12"/>
<path d="M396.7,341.7C398.2,342.1 403.5,343.3 406.7,344.2C409.9,345.1 414.8,346.6 418.3,347.5C421.8,348.4 426.2,349.6 430.0,350.0C433.8,350.4 439.3,350.5 443.3,350.5C447.3,350.5 453.4,350.1 456.7,350.0C460.0,349.9 462.5,349.4 465.0,349.5C467.5,349.6 470.8,350.2 473.3,350.5C475.8,350.8 479.4,351.7 481.7,351.7C483.9,351.7 486.3,350.9 488.3,350.3C490.3,349.7 493.3,348.3 495.0,347.5C496.7,346.7 499.0,345.4 499.7,345.0" stroke="#2b2b2b" stroke-width="1.12"/>
<path d="M362.2,302.8C362.0,303.3 361.8,305.2 361.1,306.1C360.4,307.0 359.1,308.1 357.8,308.9C356.5,309.6 354.2,310.4 352.2,311.1C350.2,311.8 346.7,312.5 344.4,313.4C342.1,314.3 338.9,315.8 336.7,317.0C334.5,318.2 333.0,319.5 330.0,321.1C327.0,322.7 319.9,326.0 316.7,327.8C313.5,329.6 310.4,331.8 308.9,333.3C307.4,334.8 306.5,336.1 306.7,337.8C306.9,339.5 308.2,341.7 310.0,344.4C311.8,347.1 316.4,352.5 318.9,355.6C321.4,358.7 324.3,362.4 326.4,365.0C328.5,367.6 330.6,370.3 332.6,372.6C334.6,374.9 338.8,379.4 339.9,380.6" stroke="#2b2b2b" stroke-width="1.54"/>
<path d="M356.7,327.8C355.4,328.1 351.1,328.8 347.8,330.0C344.5,331.2 337.7,334.2 334.4,335.6C331.1,337.0 327.6,339.0 326.0,339.6C324.4,340.2 323.9,339.3 323.5,339.3" stroke="#2b2b2b" stroke-width="1.4"/>
<path d="M323.5,339.3C324.5,341.1 327.5,347.2 330.0,351.1C332.5,355.0 338.0,362.2 339.9,365.0C341.8,367.8 341.6,368.3 342.4,369.9C343.2,371.5 344.4,374.2 345.1,375.4C345.8,376.6 346.4,377.1 347.2,377.8C348.0,378.5 349.8,379.5 350.7,380.3C351.6,381.1 352.7,382.1 353.5,383.1C354.3,384.1 355.4,386.0 355.9,387.2C356.4,388.4 356.7,390.3 356.8,391.4C356.9,392.5 356.6,393.9 356.3,394.5C356.0,395.1 355.3,395.8 354.9,395.6C354.5,395.5 354.1,394.3 353.8,393.5C353.5,392.7 353.2,390.7 352.8,390.0C352.4,389.3 351.3,389.1 351.0,389.0" stroke="#2b2b2b" stroke-width="1.54"/>
<path d="M340.6,379.6C340.6,380.3 340.8,382.7 340.6,384.4C340.4,386.1 339.7,388.9 339.2,390.7C338.7,392.5 337.9,394.6 337.5,396.3C337.1,398.0 336.5,400.3 336.5,401.8C336.5,403.3 337.0,404.9 337.5,406.0C338.0,407.1 339.3,408.4 339.9,408.8C340.5,409.2 341.6,409.1 341.3,408.4C341.0,407.7 338.7,404.6 338.2,403.9" stroke="#2b2b2b" stroke-width="1.54"/>
<path d="M338.2,403.9C338.7,404.4 340.6,406.7 341.7,407.4C342.8,408.1 345.2,409.0 345.5,408.8C345.8,408.6 344.4,406.9 343.8,406.0C343.2,405.1 342.1,403.6 341.7,402.5C341.3,401.4 341.0,400.1 341.3,399.0C341.6,397.9 343.1,395.5 343.4,394.9" stroke="#2b2b2b" stroke-width="1.54"/>
<path d="M343.4,394.9C343.5,395.3 343.3,396.6 343.8,397.6C344.3,398.6 345.6,400.6 346.5,401.8C347.4,403.0 349.2,404.6 350.0,405.3C350.8,406.0 351.5,406.5 351.7,406.3C351.9,406.1 351.8,404.8 351.4,403.9C351.0,403.0 349.8,401.4 349.3,400.4C348.8,399.3 348.3,398.0 348.3,396.9C348.3,395.8 348.6,394.0 349.0,392.8C349.4,391.6 350.7,389.6 351.0,389.0" stroke="#2b2b2b" stroke-width="1.54"/>
<path d="M348.9,330.0C349.2,331.2 350.1,335.1 351.1,337.8C352.1,340.5 354.4,344.8 355.6,347.8C356.8,350.8 358.3,355.2 358.9,357.8C359.5,360.4 359.4,363.4 359.4,365.0C359.4,366.6 359.4,367.4 359.0,368.5C358.6,369.6 357.6,371.4 356.9,372.6C356.2,373.8 355.0,375.7 354.2,376.8C353.4,377.9 352.1,379.4 351.7,379.9" stroke="#2b2b2b" stroke-width="1.2"/>
<path d="M394.8,345.8C394.9,346.9 395.3,350.2 395.6,353.3C395.9,356.4 396.6,362.7 396.7,366.7C396.8,370.7 396.2,376.0 396.2,380.0C396.2,384.0 396.3,389.6 396.7,393.3C397.1,397.0 398.1,400.7 398.9,404.4C399.7,408.1 401.4,413.8 402.2,417.8C403.0,421.8 403.9,427.8 404.4,431.1C404.9,434.4 405.3,436.8 405.4,440.0C405.5,443.2 405.2,448.4 405.0,452.5C404.8,456.6 403.9,462.7 403.8,467.1C403.7,471.5 404.2,477.0 404.0,481.7C403.8,486.4 403.0,493.3 402.3,498.3C401.6,503.3 400.1,510.0 399.2,515.0C398.3,520.0 396.9,526.7 396.0,531.7C395.1,536.7 394.0,543.3 393.3,548.3C392.6,553.3 391.8,560.0 391.3,565.0C390.8,570.0 389.9,577.0 389.8,581.7C389.7,586.4 390.0,591.9 390.4,596.3C390.8,600.7 391.9,607.0 392.5,610.8C393.1,614.5 394.4,618.8 394.6,621.3C394.8,623.8 394.7,626.2 394.0,627.5C393.3,628.8 391.2,629.9 389.8,630.0C388.4,630.1 385.7,628.7 385.0,628.5" stroke="#2b2b2b" stroke-width="1.2"/>
<path d="M360.0,330.0C360.3,330.8 361.2,334.1 362.2,335.6C363.2,337.1 365.0,339.2 366.7,340.0C368.4,340.8 371.5,341.3 373.3,341.1C375.1,340.9 377.7,339.6 378.9,338.9C380.1,338.2 380.8,337.0 381.1,336.7" stroke="#4a4a4a" stroke-width="1.01"/>
<path d="M384.4,333.3C384.7,334.1 385.7,337.4 386.7,338.9C387.7,340.4 389.9,342.6 391.1,343.3C392.3,344.0 393.9,343.3 394.4,343.3" stroke="#4a4a4a" stroke-width="1.01"/>
<path d="M343.4,409.4C343.7,410.2 344.6,413.1 345.1,415.0C345.6,416.9 345.8,419.1 346.7,422.2C347.6,425.3 349.9,432.9 351.1,435.6C352.3,438.3 353.0,437.5 354.4,440.0C355.8,442.5 359.1,448.8 360.6,452.5C362.1,456.2 363.6,461.6 364.2,465.0C364.8,468.4 365.0,472.0 364.8,475.4C364.6,478.8 363.6,483.8 362.7,487.9C361.8,492.0 359.5,498.1 358.5,502.5C357.5,506.9 356.3,512.7 355.8,517.1C355.3,521.5 355.3,527.0 355.0,531.7C354.7,536.4 354.4,543.9 353.8,548.3C353.2,552.7 352.3,557.3 351.3,560.8C350.3,564.2 348.1,568.8 347.1,571.3C346.1,573.8 345.0,575.6 344.6,577.5C344.2,579.4 344.1,581.6 344.6,583.8C345.1,586.0 347.1,589.6 348.1,592.1C349.1,594.6 350.4,598.1 351.3,600.4C352.2,602.7 353.3,606.0 354.4,607.7C355.5,609.4 356.9,611.1 358.5,611.9C360.1,612.7 363.3,613.0 364.8,612.9C366.3,612.8 367.8,611.5 368.3,611.3" stroke="#2b2b2b" stroke-width="1.08"/>
<path d="M374.4,406.2C374.7,407.9 375.9,414.1 376.7,417.8C377.5,421.5 379.1,427.8 380.0,431.1C380.9,434.4 381.7,437.1 382.5,440.0C383.3,442.9 384.7,447.0 385.6,450.4C386.5,453.8 388.2,459.5 388.8,462.9C389.4,466.3 390.0,470.2 389.8,473.3C389.6,476.4 388.8,480.4 387.7,483.8C386.6,487.2 383.8,492.6 382.5,496.3C381.2,500.1 379.7,505.1 378.8,508.8C377.9,512.5 377.3,517.2 376.3,521.3C375.3,525.3 373.5,531.4 372.1,535.8C370.7,540.2 368.3,546.3 366.9,550.4C365.5,554.5 363.5,559.1 362.7,562.9C361.9,566.6 361.4,571.6 361.3,575.4C361.2,579.1 361.3,584.1 361.7,587.9C362.1,591.6 363.2,596.9 364.2,600.4C365.2,603.9 367.7,609.7 368.3,611.3" stroke="#2b2b2b" stroke-width="1.08"/>
<path d="M378.3,509.8C378.3,511.8 378.1,518.8 378.3,523.3C378.5,527.8 379.1,535.0 379.4,540.0C379.7,545.0 380.2,552.3 380.4,556.7C380.5,561.1 380.6,565.5 380.4,569.2C380.2,573.0 379.6,578.7 378.8,581.7C378.0,584.7 376.1,587.0 375.2,589.0C374.3,591.0 372.9,593.3 372.7,595.2C372.5,597.1 373.3,599.5 373.8,601.5C374.3,603.5 375.6,606.5 376.3,608.8C377.0,611.1 377.5,614.8 378.3,617.1C379.1,619.4 380.5,622.7 381.5,624.4C382.5,626.1 384.5,627.9 385.0,628.5" stroke="#2b2b2b" stroke-width="1.08"/>
<path d="M333.3,374.4C332.5,375.4 330.0,379.1 327.8,381.1C325.6,383.1 321.9,386.1 318.9,387.8C315.9,389.5 310.6,391.2 307.8,392.2C305.0,393.2 302.5,393.7 300.0,394.4C297.5,395.1 294.4,396.0 291.1,396.7C287.8,397.4 281.5,398.6 277.8,398.9C274.1,399.2 269.7,398.6 266.7,398.4C263.7,398.2 259.8,397.6 257.8,397.8C255.8,398.0 254.6,399.2 253.3,400.0C252.0,400.8 250.4,402.8 248.9,403.3C247.4,403.8 245.3,402.6 243.3,403.3C241.3,404.0 238.4,406.3 235.6,407.8C232.8,409.3 227.4,411.9 224.4,413.3C221.4,414.7 218.1,416.3 215.6,417.1C213.1,417.9 209.8,418.9 207.8,418.9C205.8,418.9 203.9,417.9 202.2,417.1C200.5,416.3 197.8,413.2 196.7,413.3C195.6,413.4 195.3,416.0 195.1,417.8C194.9,419.6 195.7,423.3 195.6,425.6C195.5,427.9 195.1,431.1 194.4,433.3C193.7,435.5 191.8,438.2 191.1,440.0C190.4,441.8 190.5,444.4 190.0,445.6C189.5,446.8 188.8,447.9 187.8,448.2C186.8,448.5 184.8,448.0 183.3,447.8C181.8,447.6 179.3,446.4 177.8,446.7C176.3,447.0 174.6,449.2 173.3,450.0C172.0,450.8 170.1,451.0 168.9,451.8C167.7,452.6 166.6,453.9 165.6,455.6C164.6,457.3 163.2,461.0 162.2,463.3C161.2,465.6 159.8,469.1 158.9,471.1C158.0,473.1 156.6,475.0 156.0,476.7C155.4,478.4 155.6,480.9 155.1,482.2C154.6,483.5 153.7,485.3 152.9,485.6C152.1,485.9 150.6,485.4 150.0,484.4C149.4,483.4 149.2,480.5 148.9,478.9C148.6,477.3 148.4,474.9 147.8,474.0C147.2,473.1 145.3,472.9 144.9,472.7" stroke="#2b2b2b" stroke-width="1.25"/>
<path d="M260.0,398.4C258.7,401.8 253.3,414.9 251.1,421.1C248.9,427.3 247.4,434.5 245.6,440.0C243.8,445.5 241.1,452.1 238.9,457.8C236.7,463.5 233.4,471.8 231.1,477.8C228.8,483.8 225.3,492.1 223.3,497.8C221.3,503.5 219.2,510.3 217.8,515.6C216.4,520.9 214.6,528.0 213.8,533.3C213.0,538.6 212.3,546.8 212.2,551.1C212.1,555.4 212.5,559.8 212.9,562.2C213.3,564.6 214.2,566.8 215.1,567.1C216.0,567.4 217.5,566.1 218.9,564.4C220.3,562.7 222.7,558.3 224.4,555.6C226.1,552.9 229.2,548.0 230.0,546.7" stroke="#4a4a4a" stroke-width="0.87"/>
<path d="M230.0,546.7C229.5,548.7 227.7,556.0 226.7,560.0C225.7,564.0 224.0,569.8 223.3,573.3C222.6,576.8 222.1,581.1 222.2,583.3C222.3,585.5 223.2,587.5 224.0,587.8C224.8,588.1 226.4,587.4 227.8,585.6C229.2,583.8 231.5,579.4 233.3,575.6C235.1,571.8 238.2,564.7 240.0,560.0C241.8,555.3 244.2,548.1 245.6,544.4C247.0,540.7 248.7,536.9 249.3,535.6" stroke="#4a4a4a" stroke-width="0.87"/>
<path d="M249.3,535.6C248.6,537.6 245.6,544.9 244.4,548.9C243.2,552.9 241.5,558.9 241.1,562.2C240.7,565.5 241.3,569.2 241.8,571.1C242.3,573.0 243.5,574.8 244.4,575.1C245.3,575.4 246.5,575.2 247.8,573.3C249.1,571.4 251.5,566.2 253.3,562.2C255.1,558.2 258.0,551.7 260.0,546.7C262.0,541.7 264.9,534.2 266.7,528.9C268.5,523.6 270.7,516.4 272.2,511.1C273.7,505.8 276.0,496.4 276.7,493.8" stroke="#4a4a4a" stroke-width="0.87"/>
<path d="M276.7,493.8C276.4,495.7 274.7,503.1 274.4,506.7C274.1,510.3 274.2,515.0 274.4,517.8C274.6,520.6 275.3,524.1 276.0,525.6C276.7,527.1 278.0,528.1 278.9,527.8C279.8,527.5 281.0,526.1 282.2,523.3C283.4,520.5 285.2,513.7 286.7,508.9C288.2,504.1 290.5,496.4 292.2,491.1C293.9,485.8 296.5,477.5 297.8,473.3C299.1,469.1 300.6,464.5 301.1,462.9" stroke="#4a4a4a" stroke-width="0.87"/>
<path d="M301.1,462.9C301.3,464.0 302.1,468.1 302.7,470.0C303.3,471.9 304.1,474.6 304.9,475.6C305.7,476.6 306.9,477.0 307.8,476.7C308.7,476.4 309.9,475.3 311.1,473.3C312.3,471.3 314.3,466.3 315.6,463.3C316.9,460.3 318.7,455.8 320.0,453.3C321.3,450.8 322.7,448.4 324.4,446.7C326.1,445.0 328.9,443.1 331.1,442.2C333.3,441.3 337.2,441.5 338.9,440.7C340.6,439.9 340.9,438.1 342.2,436.7C343.5,435.3 347.0,431.9 347.8,431.1" stroke="#4a4a4a" stroke-width="0.87"/>
<circle cx="457" cy="392" r="0.8" fill="#c8c8c8" stroke="none"/>
<circle cx="290" cy="713" r="0.7" fill="#d8d8d8" stroke="none"/>
<circle cx="157.9" cy="355" r="0.8" fill="#c4c4c4" stroke="none"/>
<circle cx="265.6" cy="402.4" r="0.6" fill="#d0d0d0" stroke="none"/>
</g>
</svg>
</body>
</html>
